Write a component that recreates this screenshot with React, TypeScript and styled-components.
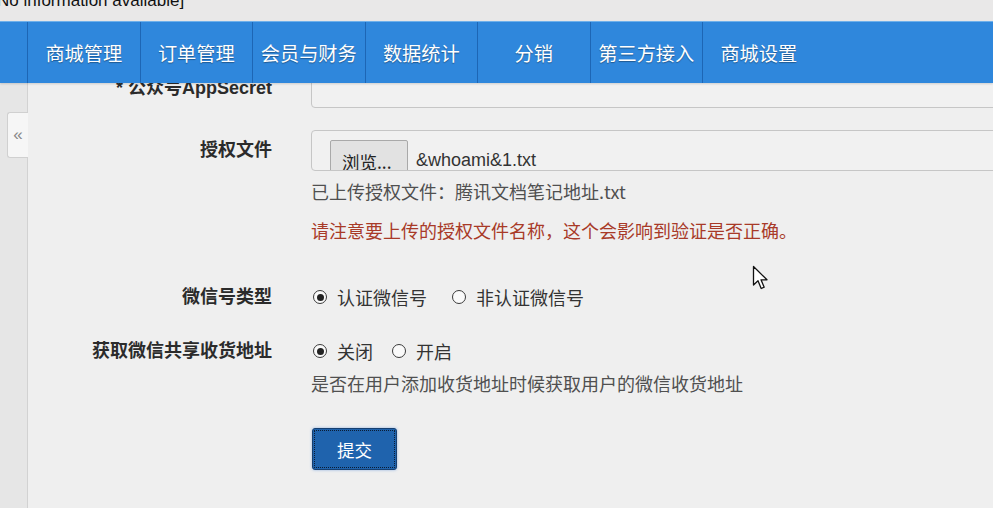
import React from "react";
import styled, { createGlobalStyle } from "styled-components";

const GlobalStyle = createGlobalStyle`
  html, body {
    margin: 0;
    padding: 0;
    background: #eeeeee;
    font-family: "Liberation Sans", "Noto Sans CJK SC", sans-serif;
  }
  * { box-sizing: border-box; }
`;

const Page = styled.div`
  width: 993px;
  height: 508px;
  display: flex;
  flex-direction: column;
  overflow: hidden;
  position: relative;
`;

const InfoStrip = styled.div`
  height: 21px;
  background: #e9e8e8;
  overflow: hidden;
  font-size: 17px;
  color: #111;
  span {
    display: block;
    margin-top: -9px;
    margin-left: -3px;
    line-height: 20px;
  }
`;

const NavBar = styled.nav`
  height: 62px;
  background: #2f87dc;
  border-top: 1px solid #6fb0ea;
  display: flex;
  padding-left: 27px;
  position: relative;
  z-index: 2;
  box-shadow: 0 1px 2px rgba(0, 0, 0, 0.15);
`;

const NavItem = styled.a`
  width: 112.5px;
  display: flex;
  align-items: center;
  justify-content: center;
  border-left: 1px solid #1d66b5;
  color: #fff;
  font-size: 19.2px;
  font-family: "Noto Sans CJK SC", sans-serif;
  text-shadow: 0 1px 1px rgba(0, 0, 0, 0.35);
  text-decoration: none;
  padding-top: 1px;
`;

const Body = styled.div`
  flex: 1;
  display: flex;
  overflow: hidden;
`;

const SideRail = styled.div`
  width: 28px;
  flex-shrink: 0;
  background: #e6e6e6;
  border-right: 1px solid #d2d2d2;
  position: relative;
`;

const CollapseTab = styled.div`
  position: absolute;
  left: 7px;
  top: 29px;
  width: 21px;
  height: 46px;
  background: #f6f6f6;
  border: 1px solid #d0d0d0;
  border-right: none;
  border-radius: 3px 0 0 3px;
  color: #888;
  font-size: 17px;
  display: flex;
  align-items: center;
  justify-content: center;
`;

const Main = styled.div`
  flex: 1;
  overflow: hidden;
  background: #efefef;
`;

const Form = styled.form`
  margin-top: -15px;
  width: 1100px;
`;

const Field = styled.div<{ $gap?: number }>`
  display: grid;
  grid-template-columns: 244px 1fr;
  column-gap: 39px;
  margin-top: ${(p) => p.$gap ?? 0}px;
`;

const Label = styled.label`
  text-align: right;
  font-weight: bold;
  font-size: 18px;
  color: #2b2b2b;
  line-height: 40px;
  white-space: nowrap;
`;

const Control = styled.div`
  display: flex;
  flex-direction: column;
`;

const TextBox = styled.div`
  height: 40px;
  width: 760px;
  border: 1px solid #c6c6c6;
  border-radius: 4px;
  background: #f1f1f1;
`;

const FileBox = styled.div`
  height: 41px;
  width: 760px;
  border: 1px solid #c6c6c6;
  border-radius: 4px;
  background: #f1f1f1;
  overflow: hidden;
  display: flex;
  align-items: flex-start;
  padding: 9px 0 0 18px;
  gap: 8px;
`;

const BrowseButton = styled.span`
  width: 78px;
  height: 40px;
  background: #e2e2e2;
  border: 1px solid #a9a9a9;
  border-radius: 2px;
  font-size: 17.5px;
  color: #222;
  font-family: "Noto Sans CJK SC", sans-serif;
  padding: 8px 0 0 11px;
  white-space: nowrap;
`;

const FileName = styled.span`
  font-size: 18px;
  color: #333;
  line-height: 24px;
  margin-top: 8px;
`;

const Hint = styled.p<{ $tone?: "warn"; $gap?: number }>`
  margin: ${(p) => p.$gap ?? 0}px 0 0 0;
  font-size: 18px;
  line-height: 24px;
  color: ${(p) => (p.$tone === "warn" ? "#a83a28" : "#505050")};
  font-family: "Noto Sans CJK SC", sans-serif;
  white-space: nowrap;
`;

const RadioGroup = styled.div<{ $spread?: number }>`
  height: 40px;
  display: flex;
  align-items: center;
  gap: ${(p) => p.$spread ?? 24}px;
  padding-left: 2px;
`;

const RadioOption = styled.span`
  display: flex;
  align-items: center;
  gap: 10px;
  font-size: 18px;
  color: #333;
  font-family: "Noto Sans CJK SC", sans-serif;
`;

const RadioDot = styled.span<{ $on?: boolean }>`
  width: 14px;
  height: 14px;
  border-radius: 50%;
  border: 1.5px solid #3a3a3a;
  background: #fafafa;
  display: flex;
  align-items: center;
  justify-content: center;
  &::after {
    content: "";
    width: 7px;
    height: 7px;
    border-radius: 50%;
    background: ${(p) => (p.$on ? "#222" : "transparent")};
  }
`;

const SubmitButton = styled.button`
  margin-top: 33px;
  margin-left: 1px;
  width: 85px;
  height: 42px;
  background: #1f63ad;
  border: 1px solid #163f70;
  border-radius: 3px;
  outline: 1px dotted #0b1c33;
  outline-offset: -3px;
  color: #fff;
  font-size: 17.5px;
  font-family: "Noto Sans CJK SC", sans-serif;
  box-shadow: 0 0 3px rgba(80, 140, 220, 0.6);
`;

const Cursor = styled.svg`
  position: absolute;
  left: 752px;
  top: 265px;
`;

const navItems = ["商城管理", "订单管理", "会员与财务", "数据统计", "分销", "第三方接入", "商城设置"];

function Radio({ on, text }: { on?: boolean; text: string }) {
  return (
    <RadioOption>
      <RadioDot $on={on} />
      {text}
    </RadioOption>
  );
}

export default function App() {
  return (
    <Page>
      <GlobalStyle />
      <InfoStrip>
        <span>No information available]</span>
      </InfoStrip>
      <NavBar>
        {navItems.map((n) => (
          <NavItem key={n}>{n}</NavItem>
        ))}
      </NavBar>
      <Body>
        <SideRail>
          <CollapseTab>«</CollapseTab>
        </SideRail>
        <Main>
          <Form onSubmit={(e) => e.preventDefault()}>
            <Field>
              <Label>* 公众号AppSecret</Label>
              <Control>
                <TextBox />
              </Control>
            </Field>
            <Field $gap={22}>
              <Label>授权文件</Label>
              <Control>
                <FileBox>
                  <BrowseButton>浏览...</BrowseButton>
                  <FileName>&amp;whoami&amp;1.txt</FileName>
                </FileBox>
                <Hint $gap={8}>已上传授权文件：腾讯文档笔记地址.txt</Hint>
                <Hint $tone="warn" $gap={15}>
                  请注意要上传的授权文件名称，这个会影响到验证是否正确。
                </Hint>
              </Control>
            </Field>
            <Field $gap={35}>
              <Label>微信号类型</Label>
              <Control>
                <RadioGroup $spread={25}>
                  <Radio on text="认证微信号" />
                  <Radio text="非认证微信号" />
                </RadioGroup>
              </Control>
            </Field>
            <Field $gap={14}>
              <Label>获取微信共享收货地址</Label>
              <Control>
                <RadioGroup $spread={19}>
                  <Radio on text="关闭" />
                  <Radio text="开启" />
                </RadioGroup>
                <Hint>是否在用户添加收货地址时候获取用户的微信收货地址</Hint>
                <div>
                  <SubmitButton type="submit">提交</SubmitButton>
                </div>
              </Control>
            </Field>
          </Form>
        </Main>
      </Body>
      <Cursor width="18" height="27" viewBox="0 0 18 27">
        <path
          d="M1.5 1.5 L1.5 20 L6 15.8 L9.2 23.5 L12.2 22.2 L9 14.8 L15 14.8 Z"
          fill="#fff"
          stroke="#111"
          strokeWidth="1.3"
          strokeLinejoin="round"
        />
      </Cursor>
    </Page>
  );
}
